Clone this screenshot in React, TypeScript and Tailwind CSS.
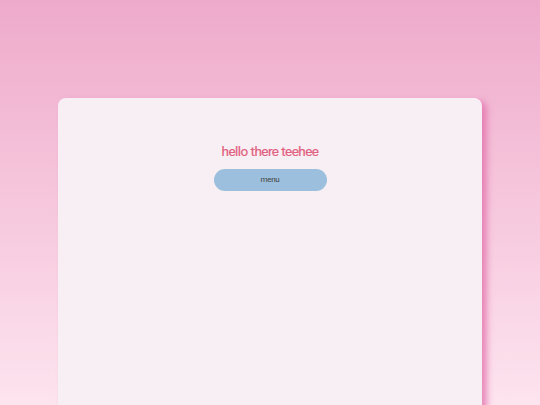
import React from "react";

export default function App() {
  return (
    <div
      className="min-h-screen w-full bg-gradient-to-b from-[#eeaacb] to-[#fde6f0] pt-[98px] overflow-hidden"
      style={{ fontFamily: "Roboto, 'Noto Sans', sans-serif" }}
    >
      <div className="mx-[58px] h-[320px] rounded-t-[8px] bg-[#f8eff4] shadow-[5px_3px_6px_rgba(226,110,170,0.75)] flex flex-col items-center pt-[44px]">
        <h1 className="text-[13.5px] leading-[18px] tracking-[-0.55px] text-[#e2607f] [-webkit-text-stroke:0.2px_#e2607f]">
          hello there teehee
        </h1>
        <button className="mt-[9px] w-[113px] h-[22px] rounded-full bg-[#9bbfdc] text-[8px] tracking-[-0.3px] text-[#444]">
          menu
        </button>
      </div>
    </div>
  );
}
